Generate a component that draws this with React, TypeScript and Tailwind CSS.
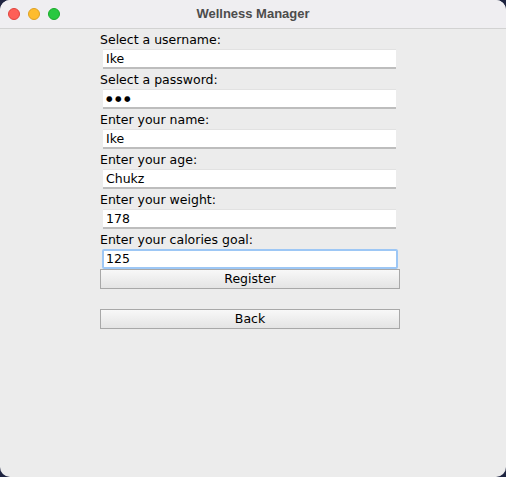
import React from 'react';

const fields = [
    { label: 'Select a username:', value: 'Ike' },
    { label: 'Select a password:', value: '●●●', secret: true },
    { label: 'Enter your name:', value: 'Ike' },
    { label: 'Enter your age:', value: 'Chukz' },
    { label: 'Enter your weight:', value: '178' },
    { label: 'Enter your calories goal:', value: '125', focused: true },
];

const font = { fontFamily: '"DejaVu Sans", "Liberation Sans", sans-serif' };

export default function App() {
    return (
        <div className="w-[506px] h-[477px] bg-[#1e2440]">
            <div className="w-full h-full rounded-[10px] overflow-hidden bg-[#ececec] flex flex-col">
                {/* title bar */}
                <div className="relative h-[29px] shrink-0 bg-[#efeef1] border-b border-[#d2d2d2] flex items-center justify-center">
                    <div className="absolute left-[8px] top-[8px] flex gap-[8px]">
                        <span className="w-[12px] h-[12px] rounded-full bg-[#fe5f57] border border-[#e0443e]" />
                        <span className="w-[12px] h-[12px] rounded-full bg-[#febc2e] border border-[#dea123]" />
                        <span className="w-[12px] h-[12px] rounded-full bg-[#28c840] border border-[#1aab29]" />
                    </div>
                    <span className="text-[13px] font-bold text-[#4c4c4c]" style={{ fontFamily: '"Liberation Sans", Arial, sans-serif' }}>
                        Wellness Manager
                    </span>
                </div>

                {/* form */}
                <div className="flex-1 pt-[2px] pl-[100px]" style={font}>
                    <div className="w-[300px] flex flex-col text-[12.5px] text-black">
                        {fields.map(f => (
                            <div key={f.label} className={f.focused ? 'flex flex-col' : 'flex flex-col mb-[2px]'}>
                                <div className="h-[18px] leading-[18px]">{f.label}</div>
                                {f.focused ? (
                                    <div className="ml-[2px] w-[296px] h-[20px] border-2 border-[#9dc7f5] rounded-[2px] bg-white pl-[2px] leading-[16px]">
                                        {f.value}
                                    </div>
                                ) : (
                                    <div className="mt-[1px] ml-[3px] w-[293px] h-[19px] bg-white border-b-2 border-[#bdbdbd] shadow-[0_-1px_0_#e2e2e2] pl-[3px] leading-[18px]">
                                        {f.secret ? <span className="text-[7.5px] tracking-[2.5px] leading-[18px] align-top">{f.value}</span> : f.value}
                                    </div>
                                )}
                            </div>
                        ))}
                        <button className="h-[20px] w-[300px] border border-[#a8a8a8] bg-gradient-to-b from-[#f8f8f8] to-[#e4e4e4] leading-[18px] text-black">
                            Register
                        </button>
                        <button className="mt-[20px] h-[20px] w-[300px] border border-[#a8a8a8] bg-gradient-to-b from-[#f8f8f8] to-[#e4e4e4] leading-[18px] text-black">
                            Back
                        </button>
                    </div>
                </div>
            </div>
        </div>
    );
}
